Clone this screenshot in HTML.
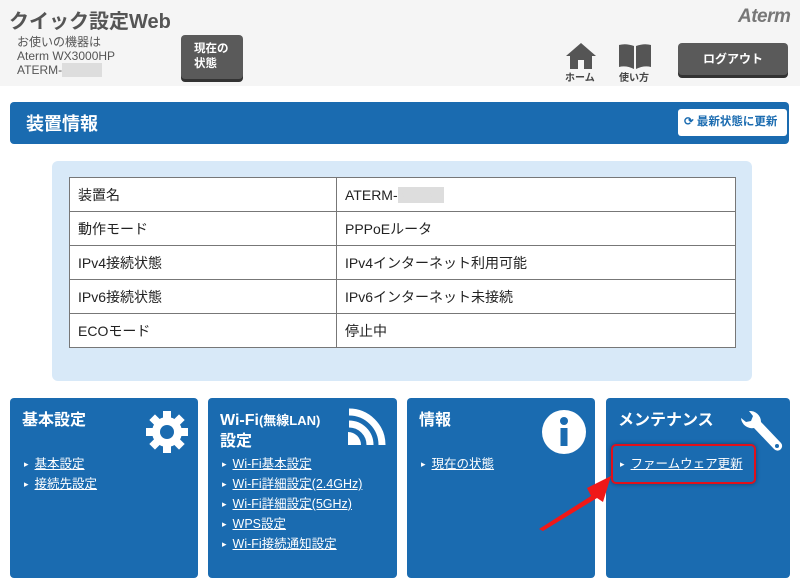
<!DOCTYPE html><html><head><meta charset="utf-8"><style>
*{margin:0;padding:0;box-sizing:border-box}
body{width:800px;height:566px;overflow:hidden;background:#fff;font-family:"Liberation Sans","Noto Sans CJK JP",sans-serif;position:relative}
.a{position:absolute}
.hdr{left:0;top:0;width:800px;height:86px;background:#f5f5f5}
.btn{background:#5a5a5a;color:#fff;font-weight:bold;border-radius:4px;box-shadow:0 3px 0 #333}
table{border-collapse:collapse;position:absolute;left:69px;top:177px;width:667px;background:#fff}
td{border:1px solid #777;height:34px;font-size:14px;color:#222;padding-left:8px}
.card{background:#1a6bb0;top:398px;height:180px;border-radius:4px;color:#fff}
.card h3{position:absolute;left:12px;top:12px;font-size:16px;font-weight:bold;line-height:21px}
.card ul{list-style:none;position:absolute;left:14px;font-size:12.5px}
.card li{height:20px;line-height:20px}
.card li:before{content:"▸";font-size:9px;margin-right:6px;vertical-align:1px}
.card li span{text-decoration:underline}
</style></head><body>
<div class="a hdr"></div>
<div class="a" style="left:9px;top:11px;font-size:20px;line-height:22px;font-weight:bold;color:#555">クイック設定Web</div>
<div class="a" style="left:17px;top:35px;font-size:12px;color:#555;line-height:14px">お使いの機器は<br>Aterm WX3000HP<br>ATERM-<span style="background:#ddd;color:#ddd">XXXXX</span></div>
<div class="a btn" style="left:181px;top:35px;width:62px;height:44px;font-size:11.5px;padding:7px 0 0 13px;line-height:15px">現在の<br>状態</div>
<div class="a" style="left:738px;top:6px;font-size:19px;font-style:italic;font-weight:bold;color:#777;letter-spacing:-0.5px">Aterm</div>
<svg class="a" style="left:566px;top:43px" width="30" height="26"><path d="M15 0L30 13H26V26H4V13H0Z" fill="#555"/><rect x="12" y="17" width="6" height="9" fill="#f5f5f5"/></svg>
<div class="a" style="left:565px;top:69px;font-size:10px;font-weight:bold;color:#444">ホーム</div>
<svg class="a" style="left:618px;top:43px" width="34" height="26"><path d="M1 2Q8 0 16 3V26Q8 22 1 24Z M18 3Q26 0 33 2V24Q26 22 18 26Z" fill="#555"/></svg>
<div class="a" style="left:619px;top:69px;font-size:10px;font-weight:bold;color:#444">使い方</div>
<div class="a btn" style="left:678px;top:43px;width:110px;height:32px;font-size:12px;text-align:center;line-height:32px">ログアウト</div>
<div class="a" style="left:10px;top:102px;width:779px;height:42px;background:#1a6bb0;border-radius:4px"></div>
<div class="a" style="left:26px;top:110px;font-size:18px;font-weight:bold;color:#fff">装置情報</div>
<div class="a" style="left:678px;top:109px;width:109px;height:27px;background:#fff;border-radius:3px;font-size:11.5px;font-weight:bold;color:#1a6bb0;line-height:27px;padding-left:6px">⟳ 最新状態に更新</div>
<div class="a" style="left:52px;top:161px;width:700px;height:220px;background:#d8e9f8;border-radius:6px"></div>
<table>
<tr><td style="width:267px">装置名</td><td>ATERM-<span style="background:#ddd;color:#ddd">XXXXX</span></td></tr>
<tr><td>動作モード</td><td>PPPoEルータ</td></tr>
<tr><td>IPv4接続状態</td><td>IPv4インターネット利用可能</td></tr>
<tr><td>IPv6接続状態</td><td>IPv6インターネット未接続</td></tr>
<tr><td>ECOモード</td><td>停止中</td></tr>
</table>
<div class="a card" style="left:10px;width:188px"><h3>基本設定</h3>
<svg class="a" style="left:135px;top:12px" width="44" height="44" viewBox="0 0 44 44"><g fill="#fff"><circle cx="22" cy="22" r="15"/><rect x="18" y="1" width="8" height="42"/><rect x="18" y="1" width="8" height="42" transform="rotate(45 22 22)"/><rect x="18" y="1" width="8" height="42" transform="rotate(90 22 22)"/><rect x="18" y="1" width="8" height="42" transform="rotate(135 22 22)"/></g><circle cx="22" cy="22" r="7" fill="#1a6bb0"/></svg>
<ul style="top:56px"><li><span>基本設定</span></li><li><span>接続先設定</span></li></ul></div>
<div class="a card" style="left:208px;width:189px"><h3>Wi-Fi<span style="font-size:13px">(無線LAN)</span><br>設定</h3>
<svg class="a" style="left:138px;top:10px" width="40" height="40"><g fill="none" stroke="#fff" stroke-width="7"><path d="M3 4A33 33 0 0 1 36 37"/><path d="M3 16A21 21 0 0 1 24 37"/></g><path d="M2 24A13 13 0 0 1 15 37H2Z" fill="#fff"/></svg>
<ul style="top:56px"><li><span>Wi-Fi基本設定</span></li><li><span>Wi-Fi詳細設定(2.4GHz)</span></li><li><span>Wi-Fi詳細設定(5GHz)</span></li><li><span>WPS設定</span></li><li><span>Wi-Fi接続通知設定</span></li></ul></div>
<div class="a card" style="left:407px;width:188px"><h3>情報</h3>
<svg class="a" style="left:135px;top:12px" width="44" height="44"><circle cx="22" cy="22" r="22" fill="#fff"/><circle cx="22" cy="11" r="4" fill="#1a6bb0"/><rect x="18.5" y="18" width="7" height="18" fill="#1a6bb0"/></svg>
<ul style="top:56px"><li><span>現在の状態</span></li></ul></div>
<div class="a card" style="left:606px;width:184px"><h3>メンテナンス</h3>
<svg class="a" style="left:134px;top:10px" width="44" height="48"><path d="M9 3L13 8L11 13L6 14L1 10A11 11 0 0 0 14 20L34 41A4 4 0 0 0 41 35L21 14A11 11 0 0 0 9 3Z" fill="#fff"/><circle cx="37" cy="38" r="2" fill="#1a6bb0"/></svg>
<ul style="top:56px"><li><span>ファームウェア更新</span></li></ul></div>
<div class="a" style="left:611px;top:444px;width:145px;height:40px;border:2px solid #e0101a;border-radius:5px;box-shadow:0 0 4px rgba(0,0,0,.4)"></div>
<svg class="a" style="left:535px;top:470px" width="80" height="62"><path d="M4 59L56 26L52 18L76 6L68 32L62 28L8 61Z" fill="#f01818"/></svg>
</body></html>
